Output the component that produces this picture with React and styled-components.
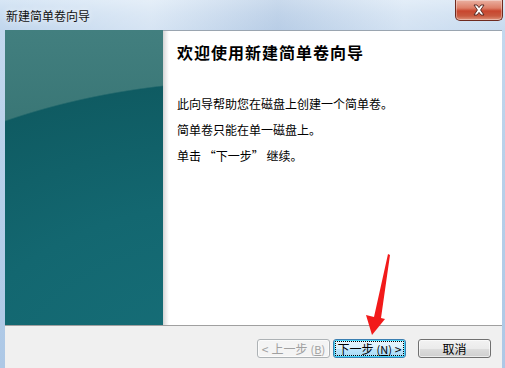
import React from "react";
import styled, { createGlobalStyle } from "styled-components";

const Global = createGlobalStyle`
  html, body { margin: 0; padding: 0; }
  body {
    width: 505px; height: 368px; overflow: hidden;
    font-family: "Noto Sans CJK SC", "Noto Sans", sans-serif;
    font-size: 12px; color: #000;
  }
`;

const Window = styled.div`
  position: relative;
  width: 505px;
  height: 368px;
  display: flex;
  flex-direction: column;
  background: linear-gradient(to bottom, #c6daef 0%, #b9d1ea 40%, #adc8e6 100%);
  overflow: hidden;
`;

const TitleBar = styled.div`
  height: 30px;
  flex: none;
  display: flex;
  align-items: flex-start;
  justify-content: space-between;
  padding-left: 6px;
  padding-right: 2px;
  background:
    linear-gradient(to right, rgba(255,255,255,0) 0%, rgba(255,255,255,0.35) 30%, rgba(160,180,210,0.25) 55%, rgba(255,255,255,0.3) 80%, rgba(255,255,255,0.1) 100%),
    linear-gradient(to bottom, #d7e6f5 0%, #c9dcf0 50%, #c1d6ed 100%);
`;

const Title = styled.div`
  margin-top: 8px;
  font-size: 12px;
  line-height: 16px;
  color: #111;
  text-shadow: 0 0 6px rgba(255,255,255,0.9);
`;

const CloseButton = styled.div`
  width: 46px;
  height: 20px;
  border: 1px solid #6e2a1f;
  border-top: none;
  border-radius: 0 0 5px 5px;
  display: flex;
  align-items: center;
  justify-content: center;
  background: linear-gradient(to bottom, #eab1a2 0%, #dd7f68 40%, #c8462e 55%, #c85a40 80%, #e0957c 100%);
  box-shadow: inset 0 0 0 1px rgba(255,255,255,0.35);
`;

const Body = styled.div`
  flex: 1;
  display: flex;
  flex-direction: column;
  margin: 0 3px 0 5px;
  min-height: 0;
`;

const Main = styled.div`
  height: 295px;
  flex: none;
  display: flex;
`;

const Sidebar = styled.div`
  width: 158px;
  flex: none;
  background:
    radial-gradient(500px 300px at 250px 350px, #17707a 0%, #136770 60%, #0f5b62 99.5%, rgba(15,91,98,0) 100%),
    linear-gradient(to bottom, #427f7f 0%, #377473 40%, #2b6969 100%);
`;

const Content = styled.div`
  flex: 1;
  padding: 11px 12px 0 14px;
  border-top: 1px solid #9aa5b0;
  background: linear-gradient(to right, #d4d4d4 0px, #ececec 3px, #ffffff 6px);
`;

const Heading = styled.h1`
  margin: 0;
  font-size: 16px;
  line-height: 20px;
  letter-spacing: 1px;
  font-weight: bold;
`;

const Paragraph = styled.p`
  margin: ${(p) => (p.$first ? "34px" : "10px")} 0 0 0;
  font-size: 12px;
  line-height: 16px;
`;

const Footer = styled.div`
  flex: 1;
  display: flex;
  justify-content: flex-end;
  align-items: flex-start;
  padding: 13px 11px 0 0;
  border-top: 1px solid #a0a0a0;
  background: #f0f0f0;
`;

const Button = styled.div`
  box-sizing: border-box;
  width: 73px;
  height: 19px;
  margin-left: ${(p) => p.$gap || 0}px;
  display: flex;
  align-items: center;
  justify-content: center;
  gap: 3px;
  font-size: 12px;
  line-height: 14px;
  border-radius: 3px;
  white-space: nowrap;
  border: 1px solid ${(p) => (p.$disabled ? "#adb2b5" : p.$focus ? "#3c7fb1" : "#707070")};
  color: ${(p) => (p.$disabled ? "#a0a0a0" : "#000")};
  background: ${(p) =>
    p.$disabled
      ? "#f4f4f4"
      : p.$focus
      ? "linear-gradient(to bottom, #eaf6fd 0%, #d9f0fc 50%, #bee6fd 51%, #a7d9f5 100%)"
      : "linear-gradient(to bottom, #f2f2f2 0%, #ebebeb 50%, #dddddd 51%, #cfcfcf 100%)"};
  box-shadow: ${(p) => (p.$focus ? "inset 0 0 0 1px #48d8fb" : "inset 0 0 0 1px rgba(255,255,255,0.6)")};
  outline: ${(p) => (p.$focus ? "1px dotted #000" : "none")};
  outline-offset: -3px;
`;

const Key = styled.span`
  font-size: 11px;
`;

const Underline = styled.span`
  text-decoration: underline;
`;

const Overlay = styled.svg`
  position: absolute;
  left: 0;
  top: 0;
  pointer-events: none;
`;

export default function App() {
  return (
    <>
      <Global />
      <Window>
        <TitleBar>
          <Title>新建简单卷向导</Title>
          <CloseButton>
            <svg width="16" height="12" viewBox="0 0 16 12">
              <path
                d="M3 1 L6 1 L8 3.6 L10 1 L13 1 L9.6 6 L13 11 L10 11 L8 8.4 L6 11 L3 11 L6.4 6 Z"
                fill="#fff"
                stroke="#4a1e18"
                strokeWidth="0.9"
                strokeLinejoin="round"
              />
            </svg>
          </CloseButton>
        </TitleBar>
        <Body>
          <Main>
            <Sidebar />
            <Content>
              <Heading>欢迎使用新建简单卷向导</Heading>
              <Paragraph $first>此向导帮助您在磁盘上创建一个简单卷。</Paragraph>
              <Paragraph>简单卷只能在单一磁盘上。</Paragraph>
              <Paragraph>单击 “下一步” 继续。</Paragraph>
            </Content>
          </Main>
          <Footer>
            <Button $disabled>
              <span>&lt;</span>
              <span>上一步</span>
              <Key>(<Underline>B</Underline>)</Key>
            </Button>
            <Button $focus $gap={3}>
              <span>下一步</span>
              <Key>(<Underline>N</Underline>)</Key>
              <span>&gt;</span>
            </Button>
            <Button $gap={12}>取消</Button>
          </Footer>
        </Body>
        <Overlay width="505" height="368" viewBox="0 0 505 368">
          <polygon
            points="388,254 390,255 381,318 385,319 372,335 366,315 374,317"
            fill="#f21a1a"
          />
        </Overlay>
      </Window>
    </>
  );
}
